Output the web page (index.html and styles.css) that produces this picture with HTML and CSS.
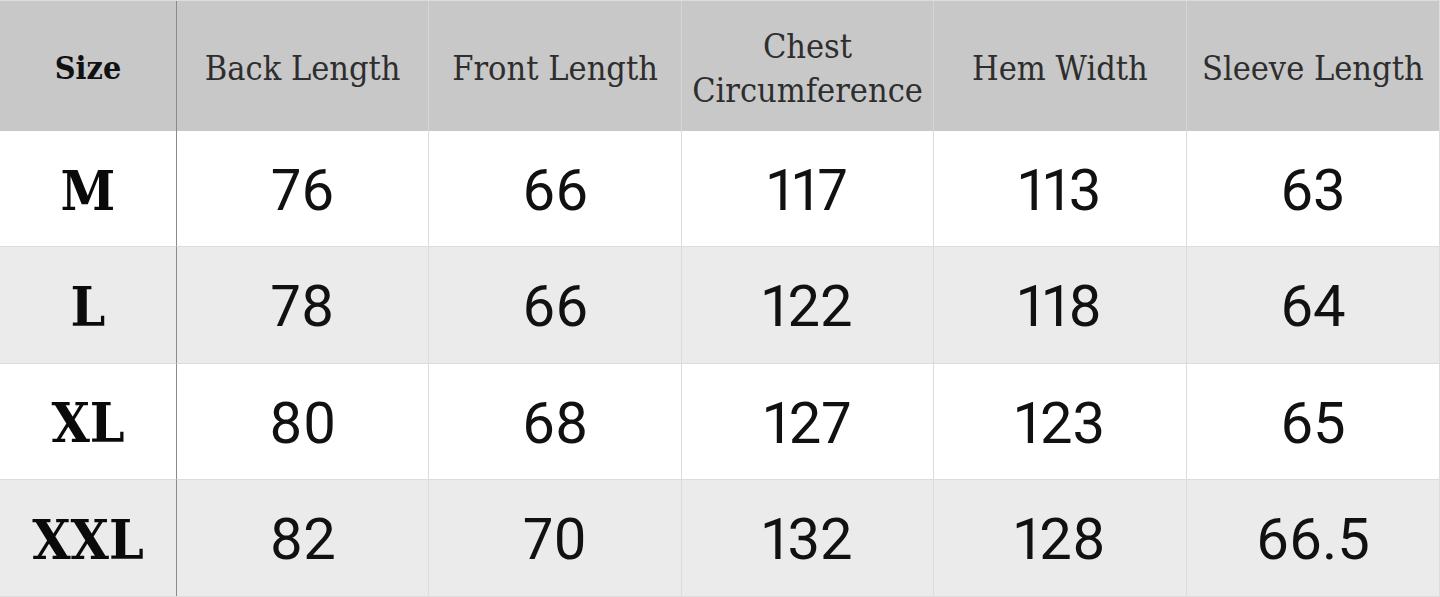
FILE: index.html
```html
<!DOCTYPE html>
<html>
<head>
<meta charset="utf-8">
<link rel="stylesheet" href="styles.css">
</head>
<body>
<div class="table">
  <div class="cell head size">Size</div>
  <div class="cell head">Back Length</div>
  <div class="cell head">Front Length</div>
  <div class="cell head">Chest<br>Circumference</div>
  <div class="cell head">Hem Width</div>
  <div class="cell head">Sleeve Length</div>

  <div class="cell label">M</div>
  <div class="cell num">76</div>
  <div class="cell num">66</div>
  <div class="cell num">117</div>
  <div class="cell num">113</div>
  <div class="cell num">63</div>

  <div class="cell label alt">L</div>
  <div class="cell num alt">78</div>
  <div class="cell num alt">66</div>
  <div class="cell num alt">122</div>
  <div class="cell num alt">118</div>
  <div class="cell num alt">64</div>

  <div class="cell label">XL</div>
  <div class="cell num">80</div>
  <div class="cell num">68</div>
  <div class="cell num">127</div>
  <div class="cell num">123</div>
  <div class="cell num">65</div>

  <div class="cell label alt">XXL</div>
  <div class="cell num alt">82</div>
  <div class="cell num alt">70</div>
  <div class="cell num alt">132</div>
  <div class="cell num alt">128</div>
  <div class="cell num alt">66.5</div>
</div>
</body>
</html>
```

FILE: styles.css
```css
html, body {
  margin: 0;
  padding: 0;
  background: #ffffff;
}

.table {
  width: 1440px;
  height: 597px;
  display: grid;
  grid-template-columns: 177px repeat(5, 1fr);
  grid-template-rows: 130px repeat(4, 1fr);
  box-sizing: border-box;
  border-top: 1px solid #dddddd;
  border-right: 1px solid #dddddd;
  border-bottom: 1px solid #dddddd;
}

.cell {
  display: flex;
  align-items: center;
  justify-content: center;
  text-align: center;
  border-right: 1px solid #dcdcdc;
  border-bottom: 1px solid #dcdcdc;
  color: #111111;
  background: #ffffff;
  box-sizing: border-box;
  padding-top: 3px;
}

.cell:nth-child(6n) {
  border-right: none;
}

.cell:nth-child(6n+1) {
  border-right: 1px solid #8a8a8a;
}

.table > .cell:nth-last-child(-n+6) {
  border-bottom: none;
}

.head {
  background: #c8c8c8;
  font-family: "DejaVu Serif Condensed", "DejaVu Serif", serif;
  font-size: 34px;
  font-weight: normal;
  line-height: 44px;
  color: #2e2e2e;
  border-bottom: none;
  border-right-color: #d6d6d6;
  padding-top: 4px;
}

.head.size {
  font-weight: bold;
  font-size: 32px;
  color: #111111;
}

.label {
  font-family: "DejaVu Serif Condensed", "DejaVu Serif", serif;
  font-weight: bold;
  font-size: 55px;
  color: #0a0a0a;
}

.num {
  font-family: Roboto, "Liberation Sans", sans-serif;
  font-size: 58px;
  font-variant-numeric: proportional-nums;
  color: #111111;
}

.alt {
  background: #ebebeb;
}
```
